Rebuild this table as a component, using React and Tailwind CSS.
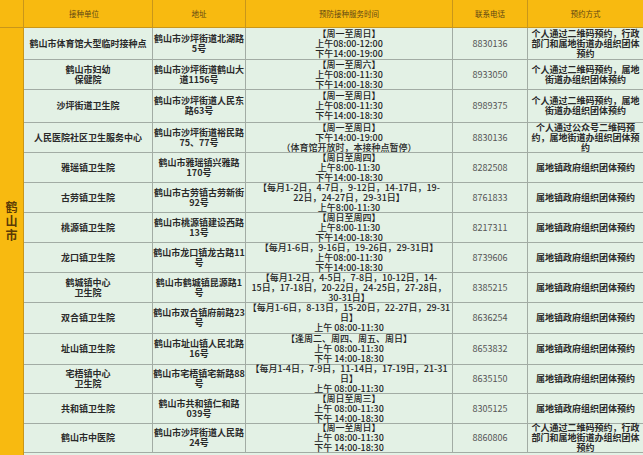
import React from "react";

const rows = [
  { name: ["鹤山市体育馆大型临时接种点"], addr: ["鹤山市沙坪街道北湖路", "5号"], time: ["【周一至周日】", "上午08:00-12:00", "下午14:00-19:00"], tel: "8830136", way: ["个人通过二维码预约，行政", "部门和属地街道办组织团体", "预约"] },
  { name: ["鹤山市妇幼", "保健院"], addr: ["鹤山市沙坪街道鹤山大", "道1156号"], time: ["【周一至周六】", "上午08:00-11:30", "下午14:00-18:30"], tel: "8933050", way: ["个人通过二维码预约，属地", "街道办组织团体预约"] },
  { name: ["沙坪街道卫生院"], addr: ["鹤山市沙坪街道人民东", "路63号"], time: ["【周一至周日】", "上午08:00-11:30", "下午14:00-18:30"], tel: "8989375", way: ["个人通过二维码预约，属地", "街道办组织团体预约"] },
  { name: ["人民医院社区卫生服务中心"], addr: ["鹤山市沙坪街道裕民路", "75、77号"], time: ["【周一至周日】", "下午14:00-19:00", "（体育馆开放时，本接种点暂停）"], tel: "8830136", way: ["个人通过公众号二维码预", "约，属地街道办组织团体预", "约"] },
  { name: ["雅瑶镇卫生院"], addr: ["鹤山市雅瑶镇兴雅路", "170号"], time: ["【周日至周四】", "上午8:00-11:30", "下午14:00-18:30"], tel: "8282508", way: ["属地镇政府组织团体预约"] },
  { name: ["古劳镇卫生院"], addr: ["鹤山市古劳镇古劳新街", "92号"], time: ["【每月1-2日，4-7日，9-12日，14-17日，19-", "22日，24-27日，29-31日】", "上午8:00-11:30"], tel: "8761833", way: ["属地镇政府组织团体预约"] },
  { name: ["桃源镇卫生院"], addr: ["鹤山市桃源镇建设西路", "13号"], time: ["【周日至周四】", "上午8:00-11:30", "下午14:00-18:30"], tel: "8217311", way: ["属地镇政府组织团体预约"] },
  { name: ["龙口镇卫生院"], addr: ["鹤山市龙口镇龙古路11", "号"], time: ["【每月1-6日，9-16日，19-26日，29-31日】", "上午08:00-11:30", "下午14:00-18:30"], tel: "8739606", way: ["属地镇政府组织团体预约"] },
  { name: ["鹤城镇中心", "卫生院"], addr: ["鹤山市鹤城镇昆源路1", "号"], time: ["【每月1-2日，4-5日，7-8日，10-12日，14-", "15日，17-18日，20-22日，24-25日，27-28日，", "30-31日】"], tel: "8385215", way: ["属地镇政府组织团体预约"] },
  { name: ["双合镇卫生院"], addr: ["鹤山市双合镇府前路23", "号"], time: ["【每月1-6日，8-13日，15-20日，22-27日，29-31", "日】", "上午 08:00-11:30"], tel: "8636254", way: ["属地镇政府组织团体预约"] },
  { name: ["址山镇卫生院"], addr: ["鹤山市址山镇人民北路", "16号"], time: ["【逢周二、周四、周五、周日】", "上午 08:00-11:30", "下午 14:00-18:30"], tel: "8653832", way: ["属地镇政府组织团体预约"] },
  { name: ["宅梧镇中心", "卫生院"], addr: ["鹤山市宅梧镇宅新路88", "号"], time: ["【每月1-4日，7-9日，11-14日，17-19日，21-31", "日】", "上午 08:00-11:30"], tel: "8635150", way: ["属地镇政府组织团体预约"] },
  { name: ["共和镇卫生院"], addr: ["鹤山市共和镇仁和路", "039号"], time: ["【周日至周三】", "上午 08:00-11:30", "下午 14:00-18:30"], tel: "8305125", way: ["属地镇政府组织团体预约"] },
  { name: ["鹤山市中医院"], addr: ["鹤山市沙坪街道人民路", "24号"], time: ["【周一至周日】", "上午 08:00-11:30", "下午 14:00-18:30"], tel: "8860806", way: ["个人通过二维码预约，行政", "部门和属地街道办组织团体", "预约"] },
];

function Lines({ items }) {
  return items.map((t, i) => (
    <div key={i} className="whitespace-nowrap">
      {t}
    </div>
  ));
}

const cell =
  "border-r border-b border-[#a2aca4] flex flex-col items-center justify-center text-center overflow-visible";
const head =
  "border-r border-b border-[#c9961a] flex items-center justify-center text-[7.5px] text-[#5e4714]";

export default function App() {
  return (
    <div className="w-[643px] h-[455px] overflow-hidden bg-[#e3f1e5] font-['Noto_Sans_CJK_SC','Noto_Sans',sans-serif] text-[9px] leading-[10px] text-[#262626]">
      <div className="grid grid-cols-[24px_129px_93px_207px_75px_115px] grid-rows-[28px_32px_30px_33px_30px_30px_30px_30px_30px_30px_31px_31px_29px_30px_29px_2px]">
        <div className="bg-[#f8ba10] border-r border-b border-[#c9961a]"></div>
        <div className={head + " bg-[#f8ba10] pr-[8px]"}>接种单位</div>
        <div className={head + " bg-[#f8ba10]"}>地址</div>
        <div className={head + " bg-[#f8ba10]"}>预防接种服务时间</div>
        <div className={head + " bg-[#f8ba10]"}>联系电话</div>
        <div className={head + " bg-[#f8ba10] border-r-0"}>预约方式</div>

        <div className="row-start-2 row-end-[17] col-start-1 bg-[#f8ba10] border-r border-[#c9961a] flex flex-col items-center justify-center pb-[42px] text-[12px] leading-[14px] font-bold text-[#5a3a06]">
          <span>鹤</span>
          <span>山</span>
          <span>市</span>
        </div>

        {rows.map((r, i) => (
          <React.Fragment key={i}>
            <div className={cell + " col-start-2 font-bold text-[#2a2a2a]"}>
              <Lines items={r.name} />
            </div>
            <div className={cell + " font-bold text-[#2a2a2a]"}>
              <Lines items={r.addr} />
            </div>
            <div className={cell + " font-medium text-[#242424]"}>
              <Lines items={r.time} />
            </div>
            <div className={cell + " text-[#555]"}>{r.tel}</div>
            <div className={cell + " border-r-0 font-bold text-[#2a2a2a]"}>
              <Lines items={r.way} />
            </div>
          </React.Fragment>
        ))}
      </div>
    </div>
  );
}
